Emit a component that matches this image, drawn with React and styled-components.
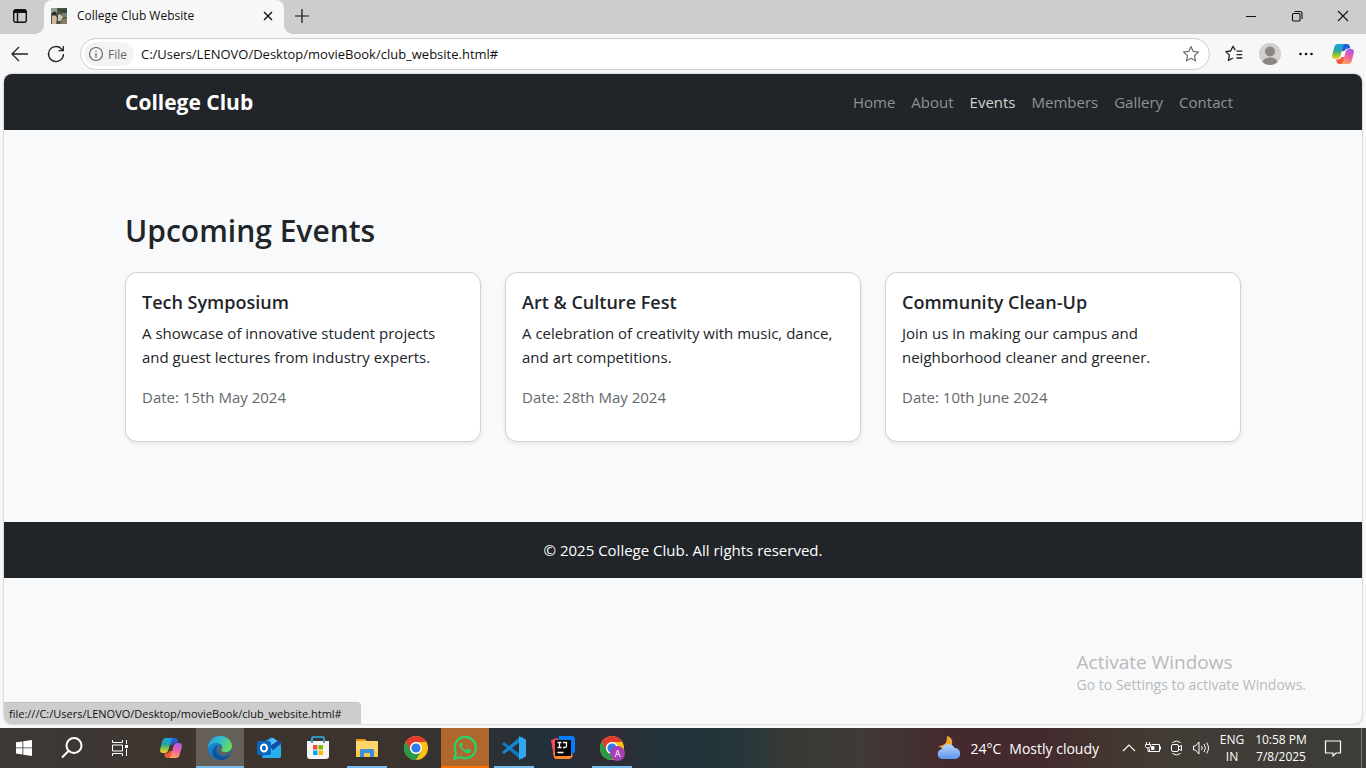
import React from "react";
import styled, { createGlobalStyle, css } from "styled-components";

const GlobalStyle = createGlobalStyle`
  *, *::before, *::after { box-sizing: border-box; }
  body { margin: 0; font-family: "Open Sans", "Noto Sans", sans-serif; color: #212529; }
  h1, h2, h3, p, ul { margin: 0; padding: 0; }
  button { font: inherit; color: inherit; background: none; border: 0; padding: 0; }
  a { color: inherit; text-decoration: none; }
  svg { display: block; flex: none; }
`;

const Screen = styled.div`
  display: flex;
  flex-direction: column;
  min-height: 100vh;
  background: #f7f7f7;
`;

const TabStrip = styled.header`
  display: flex;
  height: 34px;
  background: #cdcdcd;
  color: #111;
`;

const StripButton = styled.button`
  display: flex;
  align-items: center;
  justify-content: center;
  width: ${(p) => p.$width || 36}px;
  height: 34px;
  padding-bottom: 2px;
`;

const Tab = styled.div`
  position: relative;
  display: flex;
  align-items: center;
  width: 240px;
  margin-left: 4px;
  padding: 0 8px 2px 7px;
  border-radius: 8px 8px 0 0;
  background: #f7f7f7;
  &::before, &::after {
    content: "";
    position: absolute;
    bottom: 0;
    width: 8px;
    height: 8px;
  }
  &::before { right: 100%; background: radial-gradient(circle at 0 0, transparent 7px, #f7f7f7 8px); }
  &::after { left: 100%; background: radial-gradient(circle at 100% 0, transparent 7px, #f7f7f7 8px); }
`;

const TabTitle = styled.span`
  flex: 1;
  margin-left: 10px;
  font-size: 12px;
  line-height: 16px;
`;

const WindowControls = styled.div`
  display: flex;
  margin-left: auto;
`;

const Toolbar = styled.div`
  display: flex;
  align-items: center;
  height: 40px;
  padding: 0 4px 0 2px;
`;

const ToolButton = styled.button`
  display: flex;
  align-items: center;
  justify-content: center;
  width: ${(p) => p.$width || 36}px;
  height: 32px;
`;

const AddressBar = styled.form`
  display: flex;
  align-items: center;
  flex: 1;
  height: 32px;
  margin: 0 6px;
  padding: 0 6px 0 3px;
  border: 1px solid #cecece;
  border-radius: 16px;
  background: #fff;
`;

const FileChip = styled.button`
  display: flex;
  align-items: center;
  gap: 4px;
  height: 24px;
  padding: 0 7px 0 4px !important;
  border-radius: 12px;
  background: #f3f3f3 !important;
  color: #666 !important;
  font-size: 12px !important;
`;

const AddressInput = styled.input`
  flex: 1;
  min-width: 0;
  margin-left: 7px;
  padding: 0;
  border: 0;
  outline: 0;
  background: transparent;
  color: #111;
  font-family: inherit;
  font-size: 13px;
  line-height: 20px;
`;

const StarButton = styled.button`
  display: flex;
  align-items: center;
  justify-content: center;
  width: 24px;
  height: 24px;
`;

const Viewport = styled.div`
  position: relative;
  flex: 1;
  margin: 0 4px 4px;
  border-radius: 8px;
  overflow: hidden;
  background: #f8f9fa;
  box-shadow: 0 0 2px #999;
`;

const Container = styled.div`
  max-width: 1140px;
  margin: 0 auto;
  padding: 0 12px;
`;

const NavBar = styled.nav`
  background: #212529;
`;

const NavRow = styled(Container)`
  display: flex;
  align-items: center;
  justify-content: space-between;
  height: 56px;
`;

const Brand = styled.a`
  color: #fff;
  font-size: 21px;
  font-weight: 700;
  line-height: 32px;
`;

const NavList = styled.ul`
  display: flex;
  list-style: none;
`;

const NavLink = styled.a`
  display: block;
  padding: 8px;
  color: ${(p) => (p.$active ? "#d3d3d4" : "#909294")};
  font-size: 15px;
  line-height: 24px;
`;

const Section = styled.main`
  padding: 80px 0;
`;

const Heading = styled.h2`
  padding-top: 2px;
  margin-bottom: 22px;
  font-size: 30px;
  font-weight: 600;
  line-height: 38px;
`;

const CardGrid = styled.div`
  display: grid;
  grid-template-columns: repeat(3, 1fr);
  gap: 24px;
`;

const Card = styled.article`
  padding: 16px 16px 32px;
  border: 1px solid #d0d2d3;
  border-radius: 12px;
  background: #fff;
  box-shadow: 0 2px 4px rgba(0, 0, 0, 0.075);
`;

const CardTitle = styled.h3`
  padding-top: 1px;
  margin-bottom: 7px;
  font-size: 18px;
  font-weight: 600;
  line-height: 24px;
`;

const CardText = styled.p`
  margin-bottom: 16px;
  font-size: 15px;
  line-height: 24px;
`;

const CardDate = styled.p`
  color: #63686c;
  font-size: 15px;
  line-height: 24px;
`;

const Footer = styled.footer`
  padding: 16px;
  background: #212529;
  color: #fff;
  font-size: 15px;
  line-height: 24px;
  text-align: center;
`;

const StatusBubble = styled.div`
  position: absolute;
  left: 0;
  bottom: 0;
  padding: 3px 12px 2px 5px;
  border-top: 1px solid #c2c2c2;
  border-radius: 0 4px 0 0;
  background: #cdcdcd;
  color: #111;
  font-size: 11px;
  line-height: 16px;
  min-width: 357px;
  white-space: nowrap;
`;

const Watermark = styled.aside`
  position: absolute;
  right: 56px;
  bottom: 29px;
  color: #b9babb;
`;

const WatermarkTitle = styled.p`
  font-size: 19px;
  line-height: 26px;
`;

const WatermarkText = styled.p`
  font-size: 14px;
  line-height: 20px;
`;

const Taskbar = styled.footer`
  display: flex;
  height: 40px;
  background: linear-gradient(90deg, #3c3a37 0%, #3f342e 15%, #3b332e 29%, #2b3036 37%, #213039 40%, #2f2d35 45%, #22333a 48%, #24363a 54%, #383a36 58%, #3f3b36 63%, #452a2d 69%, #44292d 76%, #423630 81%, #423c36 86%, #3c3c39 100%);
  color: #fff;
`;

const AppRow = styled.div`
  display: flex;
  gap: 1px;
  margin-left: 3px;
`;

const TaskButton = styled.button`
  display: flex;
  align-items: center;
  justify-content: center;
  width: ${(p) => p.$width || 48}px;
  height: 40px;
  ${(p) => p.$tone === "active" && css`
    background: #655f59 !important;
    box-shadow: inset 0 -2px #76b9ed;
  `}
  ${(p) => p.$tone === "alert" && css`
    background: #b0672d !important;
    box-shadow: inset 0 -2px #ff7200;
  `}
  ${(p) => p.$tone === "open" && css`
    background: linear-gradient(#76b9ed, #76b9ed) center bottom / 40px 2px no-repeat !important;
  `}
`;

const Tray = styled.div`
  display: flex;
  align-items: center;
  margin-left: auto;
`;

const Weather = styled.button`
  display: flex;
  align-items: center;
  gap: 8px;
  margin-right: 18px;
  font-size: 14px !important;
`;

const TrayButton = styled.button`
  display: flex;
  align-items: center;
  justify-content: center;
  width: 24px;
  height: 40px;
`;

const TrayText = styled.button`
  width: ${(p) => p.$width}px;
  font-size: 12px !important;
  line-height: 17px !important;
  text-align: center;
  white-space: nowrap;
`;

const ShowDesktop = styled.button`
  width: 5px;
  height: 40px;
  margin-left: 6px;
  border-left: 1px solid #777 !important;
`;

const Line = ({ size = 20, width = 1, children, color = "currentColor" }) => (
  <svg width={size} height={size} viewBox={`0 0 ${size} ${size}`} fill="none" stroke={color} strokeWidth={width} aria-hidden="true">
    {children}
  </svg>
);

const CopilotIcon = ({ id }) => (
  <svg width="24" height="24" viewBox="0 0 24 24" aria-hidden="true">
    <defs>
      <linearGradient id={`${id}a`} x1="0" y1="0" x2="0" y2="1">
        <stop offset="0" stopColor="#18a5ed" /><stop offset=".45" stopColor="#27a49a" /><stop offset=".7" stopColor="#8ac13c" /><stop offset="1" stopColor="#ffd02e" />
      </linearGradient>
      <linearGradient id={`${id}b`} x1=".7" y1="0" x2=".3" y2="1">
        <stop offset="0" stopColor="#a55cf0" /><stop offset=".45" stopColor="#ee5fa6" /><stop offset="1" stopColor="#ffa35c" />
      </linearGradient>
    </defs>
    <path d="M11 2h5.200c1.500 0 2.200 1 2.600 2.400L19.300 6.500H17c-1.900 0-3 .9-3.600 2.500H10.800z" fill="#1f5fd8" />
    <path d="M13 22H8.500c-1.800 0-2.500-1.100-3-3l-.500-1.500h2c1.900 0 3-.9 3.600-2.500h2.600z" fill="#f2583c" />
    <path d="M7 2h7.200c-1.200.400-1.800 1.300-2.200 2.800L9.400 14c-.600 2-1.600 3-3.500 3H4c-2.400 0-3.400-1.600-2.800-4L3.300 5C3.900 3 5 2 7 2z" fill={`url(#${id}a)`} />
    <path d="M17 22H9.800c1.200-.400 1.800-1.300 2.200-2.800L14.600 10c.600-2 1.600-3 3.500-3H20c2.400 0 3.400 1.600 2.800 4L20.700 19c-.600 2-1.700 3-3.700 3z" fill={`url(#${id}b)`} />
  </svg>
);

const EdgeIcon = () => (
  <svg width="26" height="26" viewBox="0 0 26 26" aria-hidden="true">
    <defs>
      <linearGradient id="edgeTop" x1="0" y1="0" x2="1" y2=".4">
        <stop offset="0" stopColor="#2298dc" /><stop offset=".5" stopColor="#30bfd5" /><stop offset="1" stopColor="#65d85a" />
      </linearGradient>
      <linearGradient id="edgeLeft" x1="0" y1="0" x2="1" y2="1">
        <stop offset="0" stopColor="#1c96dc" /><stop offset="1" stopColor="#0b57a4" />
      </linearGradient>
    </defs>
    <circle cx="13" cy="13" r="12" fill="url(#edgeLeft)" />
    <path d="M1 12.500C1.500 5.500 6.500 1 13 1c7 0 12 4.500 12 10 0 4-3 6.500-6.500 6.500-2.500 0-4.500-1-4.500-2.200 0-.8 1.200-1.300 1.200-3.100 0-2.400-2.400-4.200-6-4.200-4 0-7 2-8.200 4.500z" fill="url(#edgeTop)" />
    <path d="M10.800 10.200c-2.600 3.500-1.400 8 2 10.400 3.200 2.300 7.500 2 10.500-.600C20.500 24 16.500 25.500 13 25 7 24.200 4.500 18.500 6 14.500c.8-2.300 2.700-4 4.800-4.300z" fill="#104b92" opacity=".8" />
    <path d="M14 15.300c0 1.200 2 2.200 4.500 2.200 1.900 0 3.700-.700 5-2-.500 2-1.500 3.400-3 4.600-2.800 1.300-6.300.8-8.200-1.400-1.900-2.200-2.300-5.600.2-8 1.600-.200 2.700.4 2.700 1.500 0 1.800-1.200 2.300-1.200 3.100z" fill="#5f615d" />
  </svg>
);

const OutlookIcon = () => (
  <svg width="26" height="26" viewBox="0 0 26 26" aria-hidden="true">
    <path d="M6 8 15.500 2 25 8v13a2 2 0 0 1-2 2H8a2 2 0 0 1-2-2z" fill="#1686d9" />
    <path d="M8 7.500 17 3l6 4v9H8z" fill="#54c0f6" />
    <path d="m14 11 9-6 2 3-8 8z" fill="#164ba5" />
    <path d="M6 22 25 10v11a2 2 0 0 1-2 2H8a2 2 0 0 1-2-1z" fill="#26b1ed" />
    <rect x="1" y="6" width="14" height="14" rx="2" fill="#0b66bd" />
    <ellipse cx="8" cy="13" rx="3" ry="3.500" fill="none" stroke="#fff" strokeWidth="2" />
  </svg>
);

const StoreIcon = () => (
  <svg width="26" height="26" viewBox="0 0 26 26" aria-hidden="true">
    <path d="M7 8V3.500A1.500 1.500 0 0 1 8.500 2h9A1.500 1.500 0 0 1 19 3.500V8" fill="none" stroke="#29b8f1" strokeWidth="1.700" />
    <path d="M2 6h22v15a3 3 0 0 1-3 3H5a3 3 0 0 1-3-3z" fill="#f4f4f4" />
    <path d="M7 6v2M19 6v2" stroke="#168fd2" strokeWidth="1.700" />
    <path fill="#f2502f" d="M8 10h4.500v4.500H8z" /><path fill="#7fba00" d="M13.500 10H18v4.500h-4.500z" />
    <path fill="#00a4ef" d="M8 15.500h4.500V20H8z" /><path fill="#ffb900" d="M13.500 15.500H18V20h-4.500z" />
  </svg>
);

const FolderIcon = () => (
  <svg width="24" height="24" viewBox="0 0 24 24" aria-hidden="true">
    <path d="M1 3h9l2 2v4H1z" fill="#df9b14" />
    <path d="M2 5h20a1 1 0 0 1 1 1v15H1V5z" fill="#ffd66b" />
    <path d="M1 15h22v6H1z" fill="#fbc84d" />
    <path d="M5 21v-7a1 1 0 0 1 1-1h12a1 1 0 0 1 1 1v7h-4v-4H9v4z" fill="#3a91da" />
  </svg>
);

const ChromeIcon = ({ badge }) => (
  <svg width="26" height="26" viewBox="0 0 26 26" aria-hidden="true">
    <circle cx="13" cy="13" r="12" fill="#fbc116" />
    <path d="M2.600 7A12 12 0 0 1 23.400 7H13a6 6 0 0 0-5.200 9z" fill="#e33b2e" />
    <path d="M2.600 7A12 12 0 0 0 13 25l5.200-9A6 6 0 0 1 7.800 16z" fill="#259b48" />
    <circle cx="13" cy="13" r="6" fill="#fff" /><circle cx="13" cy="13" r="4.600" fill="#2f7ce9" />
    {badge && <><circle cx="18.500" cy="18.500" r="7.500" fill="#a63fb5" /><text x="18.500" y="22" fontSize="9" textAnchor="middle" fill="#fff">A</text></>}
  </svg>
);

const WhatsAppIcon = () => (
  <svg width="26" height="26" viewBox="0 0 26 26" aria-hidden="true">
    <path d="M2.300 23.700 4 17.800A10.600 10.600 0 1 1 8.400 22z" fill="none" stroke="#25d366" strokeWidth="2.300" strokeLinejoin="round" />
    <path d="M9.300 7.400c-.7 0-1.900 1-1.900 2.700 0 3.100 5 8.100 8.500 8.100 1.500 0 2.900-1 2.900-2.500 0-.4-.1-.6-.5-.8l-2.300-1.100c-.4-.2-.7-.1-.9.200l-.9 1.100c-.2.300-.5.300-.8.100-1.500-.7-2.700-1.700-3.500-3.200-.200-.3-.1-.6.1-.8l.7-.8c.2-.3.200-.5.100-.8L9.900 7.800c-.1-.3-.3-.4-.6-.4z" fill="#25d366" />
  </svg>
);

const CodeIcon = () => (
  <svg width="26" height="26" viewBox="0 0 26 26" aria-hidden="true">
    <path d="m1 9 2-2 16 12v5z" fill="#1279be" /><path d="m1 17 2 2L19 7V2z" fill="#1688d0" />
    <path d="m18 1 6 3a2 2 0 0 1 1 2v14a2 2 0 0 1-1 2l-6 3z" fill="#32a9ef" />
  </svg>
);

const IntelliJIcon = () => (
  <svg width="26" height="26" viewBox="0 0 26 26" aria-hidden="true">
    <path d="M1 5l6-2 4 4v16H4z" fill="#f64b56" /><path d="m3 18 18-2 2 5-3 3H5z" fill="#fd8427" />
    <path d="M9 1h14l2 2v14l-5 3L8 7z" fill="#087cfa" />
    <rect x="5" y="5" width="16" height="16" fill="#080808" />
    <path d="M7.500 7.500h4M7.500 12.500h4M9.500 7.500v5M13 7.500h3.500v3.500q0 1.500-1.500 1.500h-2M7.500 17.500h6" fill="none" stroke="#fff" strokeWidth="1.300" />
  </svg>
);

const WeatherIcon = () => (
  <svg width="26" height="26" viewBox="0 0 26 26" aria-hidden="true">
    <defs><linearGradient id="cloud" x1="0" y1="0" x2="0" y2="1"><stop stopColor="#b8d5ff" /><stop offset="1" stopColor="#5e94ec" /></linearGradient></defs>
    <path d="M11 1c4 1 6 4 5 8-1 4-6 6-10 4l-4-2c4 0 8-2 8.500-5 .3-2 .5-3 .5-5z" fill="#f5a52c" />
    <path d="M6 24a5 5 0 0 1-.5-9.800 7 7 0 0 1 13-1.200A5.600 5.600 0 0 1 20 24z" fill="url(#cloud)" />
  </svg>
);

const FaviconPhoto = () => (
  <svg width="16" height="16" viewBox="0 0 16 16" aria-hidden="true">
    <path fill="#4b554b" d="M0 0h16v16H0z" /><path fill="#8ca293" d="M0 0h6v5H0z" />
    <path fill="#31443e" d="M7 1h9v4H7z" /><path fill="#6f8574" d="M11 5h5v4h-5z" />
    <path fill="#d9b8a0" d="M1 8l3-1 2 3-1 6H1z" />
    <circle cx="3.500" cy="5.500" r="2" fill="#302a25" /><path fill="#c9c3b4" d="m7 7 2-1 3 3-2 4H7z" />
    <circle cx="8.500" cy="4" r="1.800" fill="#6e4936" /><path fill="#8b7a62" d="m12 11 4-1v6H9z" />
  </svg>
);

const WindowsIcon = () => (
  <svg width="16" height="16" viewBox="0 0 16 16" fill="#fff" aria-hidden="true">
    <path d="M0 2.300 6.500 1.400V7.500H0zM7.300 1.200 16 0v7.500H7.300zM0 8.300h6.500v6.200L0 13.600zM7.300 8.300H16V16l-8.700-1.200z" />
  </svg>
);

const StarPath = "M10 2.500l2.200 4.900 5.300.6-4 3.600 1.100 5.300-4.600-2.700-4.600 2.700 1.100-5.300-4-3.600 5.300-.6z";

const links = ["Home", "About", "Events", "Members", "Gallery", "Contact"];

const events = [
  { title: "Tech Symposium", text: "A showcase of innovative student projects and guest lectures from industry experts.", date: "15th May 2024" },
  { title: "Art & Culture Fest", text: "A celebration of creativity with music, dance, and art competitions.", date: "28th May 2024" },
  { title: "Community Clean-Up", text: "Join us in making our campus and neighborhood cleaner and greener.", date: "10th June 2024" },
];

const apps = [
  { name: "Copilot", icon: <CopilotIcon id="taskCopilot" /> },
  { name: "Microsoft Edge", icon: <EdgeIcon />, tone: "active" },
  { name: "Outlook", icon: <OutlookIcon /> },
  { name: "Microsoft Store", icon: <StoreIcon /> },
  { name: "File Explorer", icon: <FolderIcon />, tone: "open" },
  { name: "Google Chrome", icon: <ChromeIcon /> },
  { name: "WhatsApp", icon: <WhatsAppIcon />, tone: "alert" },
  { name: "Visual Studio Code", icon: <CodeIcon />, tone: "open" },
  { name: "IntelliJ IDEA", icon: <IntelliJIcon /> },
  { name: "Google Chrome profile", icon: <ChromeIcon badge />, tone: "open" },
];

function BrowserChrome() {
  return (
    <>
      <TabStrip>
        <StripButton $width={40} aria-label="Tab actions">
          <Line size={16} width={1.4}><rect x="1.700" y="1.700" width="12.600" height="12.600" rx="2" /><path d="M2 3.500h12" strokeWidth="3" /><path d="M5.500 4v10" /></Line>
        </StripButton>
        <Tab>
          <FaviconPhoto />
          <TabTitle>College Club Website</TabTitle>
          <button aria-label="Close tab"><Line size={16} width={1.4}><path d="m4 4 8 8M12 4l-8 8" /></Line></button>
        </Tab>
        <StripButton aria-label="New tab"><Line size={16} width={1.2}><path d="M8 1v14M1 8h14" /></Line></StripButton>
        <WindowControls>
          <StripButton $width={46} aria-label="Minimize"><Line size={10}><path d="M0 5.500h10" /></Line></StripButton>
          <StripButton $width={46} aria-label="Restore"><Line size={12} width={1.1}><rect x="1.500" y="3.500" width="7.500" height="7.500" rx="1" /><path d="M3.500 1.500H9q2 0 2 2V9" /></Line></StripButton>
          <StripButton $width={46} aria-label="Close"><Line size={12} width={1.1}><path d="m1 1 10 10M11 1 1 11" /></Line></StripButton>
        </WindowControls>
      </TabStrip>
      <Toolbar>
        <ToolButton aria-label="Back"><Line width={1.3}><path d="M18 10H2.500M9 3l-7 7 7 7" /></Line></ToolButton>
        <ToolButton aria-label="Refresh"><Line width={1.3}><path d="M17.500 10A7.500 7.500 0 1 1 15.300 4.700L17 6.500M17.300 2v4.700h-4.800" /></Line></ToolButton>
        <AddressBar>
          <FileChip type="button">
            <Line size={16} width={1.2}><circle cx="8" cy="8" r="6.500" /><path d="M8 7v4.500M8 4.500v1.300" /></Line>
            File
          </FileChip>
          <AddressInput aria-label="Address" defaultValue="C:/Users/LENOVO/Desktop/movieBook/club_website.html#" />
          <StarButton type="button" aria-label="Add to favorites"><Line color="#666" width={1.1}><path d={StarPath} strokeLinejoin="round" /></Line></StarButton>
        </AddressBar>
        <ToolButton aria-label="Favorites"><Line width={1.3}><path d="M12.500 7.200h5.800M12.500 10.600h5.800M12.500 14h5.800M11.300 6.200 9 2.300 6.700 7l-4.900.6 3.600 3.500-1 5.200L9 14" strokeLinejoin="round" /></Line></ToolButton>
        <ToolButton aria-label="Profile">
          <svg width="22" height="22" viewBox="0 0 22 22" aria-hidden="true"><circle cx="11" cy="11" r="11" fill="#d2d0cd" /><circle cx="11" cy="8.500" r="5" fill="#8b8784" /><path d="M3.500 19q1.500-4.500 7.500-4.500t7.500 4.500q-3 3-7.500 3t-7.500-3z" fill="#8b8784" /></svg>
        </ToolButton>
        <ToolButton aria-label="Settings and more"><Line><g fill="#111" stroke="none"><circle cx="4.500" cy="10" r="1.300" /><circle cx="10" cy="10" r="1.300" /><circle cx="15.500" cy="10" r="1.300" /></g></Line></ToolButton>
        <ToolButton $width={38} aria-label="Copilot"><CopilotIcon id="barCopilot" /></ToolButton>
      </Toolbar>
    </>
  );
}

function ClubPage() {
  return (
    <Viewport>
      <NavBar>
        <NavRow>
          <Brand href="#">College Club</Brand>
          <NavList>
            {links.map((name) => <li key={name}><NavLink href="#" $active={name === "Events"}>{name}</NavLink></li>)}
          </NavList>
        </NavRow>
      </NavBar>
      <Section>
        <Container>
          <Heading>Upcoming Events</Heading>
          <CardGrid>
            {events.map((e) => (
              <Card key={e.title}>
                <CardTitle>{e.title}</CardTitle>
                <CardText>{e.text}</CardText>
                <CardDate>Date: {e.date}</CardDate>
              </Card>
            ))}
          </CardGrid>
        </Container>
      </Section>
      <Footer>© 2025 College Club. All rights reserved.</Footer>
      <Watermark>
        <WatermarkTitle>Activate Windows</WatermarkTitle>
        <WatermarkText>Go to Settings to activate Windows.</WatermarkText>
      </Watermark>
      <StatusBubble>file:///C:/Users/LENOVO/Desktop/movieBook/club_website.html#</StatusBubble>
    </Viewport>
  );
}

function SystemTaskbar() {
  return (
    <Taskbar>
      <TaskButton aria-label="Start"><WindowsIcon /></TaskButton>
      <TaskButton aria-label="Search"><Line size={24} width={2}><circle cx="14" cy="9.500" r="7.500" /><path d="M8.500 15 2 21.500" /></Line></TaskButton>
      <TaskButton aria-label="Task view"><Line size={16}><path d="M0.500 0v2.500h10V0M.5 5h10v6H.5zM.5 16v-2.500h10V16M14.500 0v4M14.500 9v7" /><path d="M13 5h3v3h-3z" fill="#fff" stroke="none" /></Line></TaskButton>
      <AppRow>
        {apps.map((a) => <TaskButton key={a.name} aria-label={a.name} $tone={a.tone}>{a.icon}</TaskButton>)}
      </AppRow>
      <Tray>
        <Weather><WeatherIcon /><span>24°C</span><span>Mostly cloudy</span></Weather>
        <TrayButton aria-label="Show hidden icons"><Line size={14} width={1.2}><path d="m1 10 6-6 6 6" /></Line></TrayButton>
        <TrayButton aria-label="Battery"><Line size={16}><path d="M6.500 4.500h8v7H4.500V9M15.500 6.500v3M1.500 2v2M4.500 2v2M.5 4.500h5v2q0 1.500-2.500 1.500T.5 6.500zM3 8v3.500h2" /><path d="M6.500 6.500H9v3H6.500z" fill="#fff" /></Line></TrayButton>
        <TrayButton aria-label="Meet now"><Line size={16}><rect x="2.500" y="4.500" width="7" height="7" rx="1.500" /><path d="m9.500 7 3-1.500v5l-3-1.500M3.500 2.500q4-3 8 0M3.500 13.500q4 3 8 0" /></Line></TrayButton>
        <TrayButton aria-label="Volume"><Line size={18}><path d="M1.500 7h2l3.500-4v12l-3.500-4h-2zM9.500 7q1.500 2 0 4M12 5q3 4 0 8M14.500 3.500q4 5.500 0 11" /></Line></TrayButton>
        <TrayText $width={38}>ENG<br />IN</TrayText>
        <TrayText $width={60}>10:58 PM<br />7/8/2025</TrayText>
        <TaskButton $width={44} aria-label="Notifications"><Line size={18} width={1.2}><path d="M1.500 2h15v12H12l-3 3v-3H1.500z" /></Line></TaskButton>
        <ShowDesktop aria-label="Show desktop" />
      </Tray>
    </Taskbar>
  );
}

export default function App() {
  return (
    <Screen>
      <GlobalStyle />
      <BrowserChrome />
      <ClubPage />
      <SystemTaskbar />
    </Screen>
  );
}
